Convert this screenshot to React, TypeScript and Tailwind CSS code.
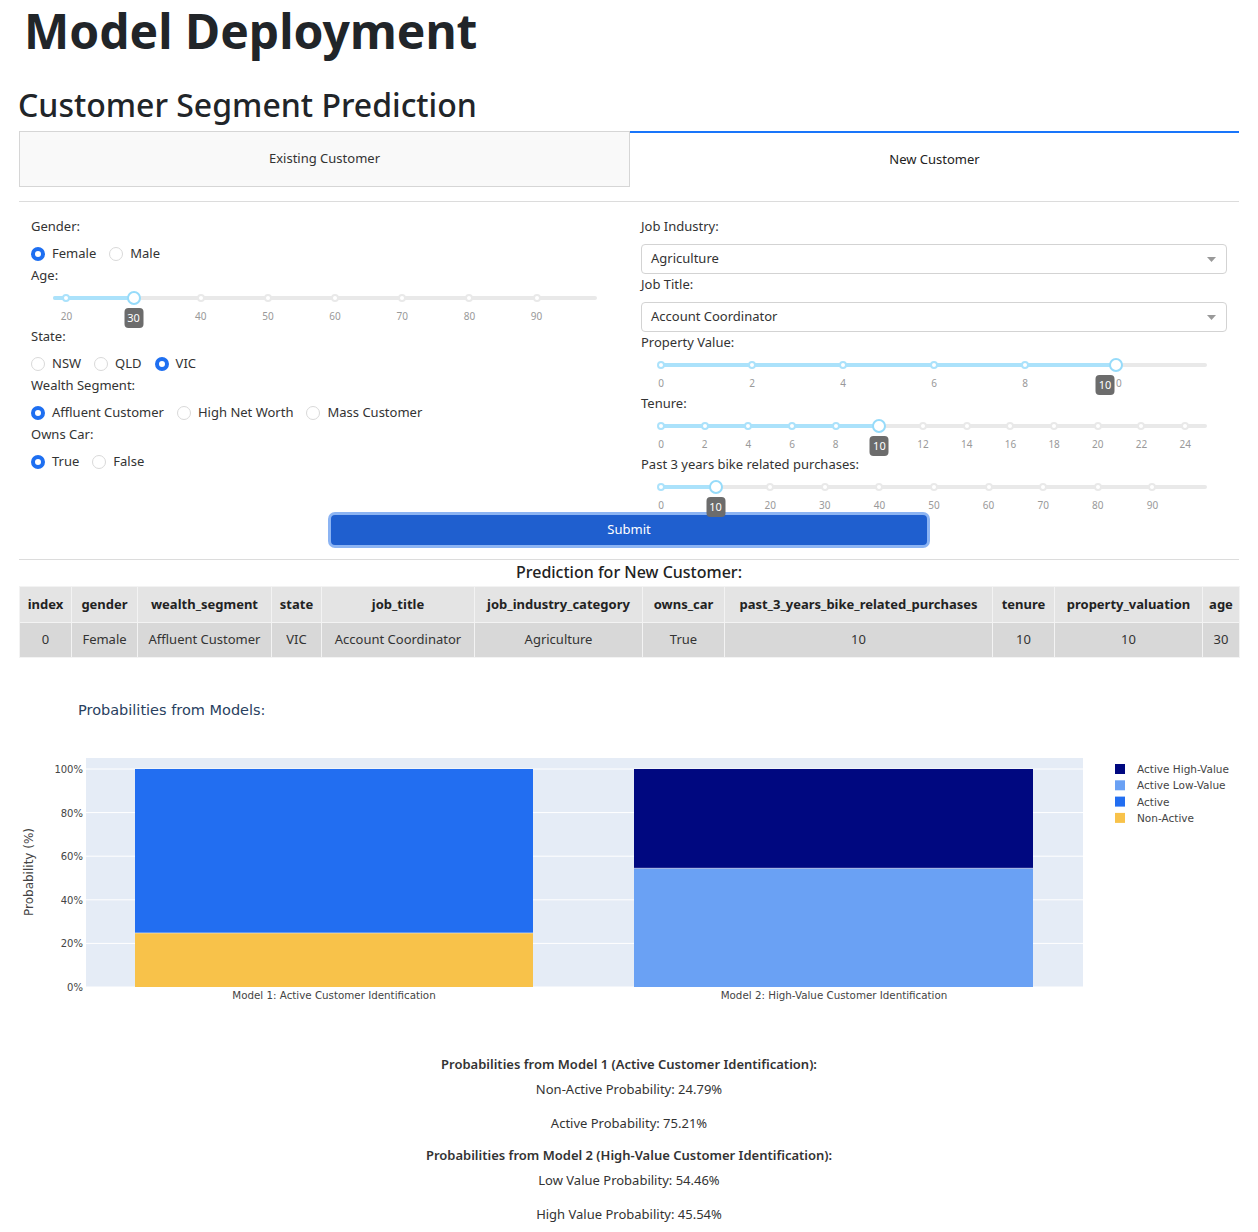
import React from "react";

const FONT = { fontFamily: '"Noto Sans", "Open Sans", sans-serif' };
const PLOT_FONT = '"DejaVu Sans", Verdana, sans-serif';

function Radio({ label, checked }: { label: string; checked?: boolean }) {
  return (
    <label className="flex items-center gap-[7px] mr-[13px]">
      <span
        className={
          checked
            ? "w-[14px] h-[14px] rounded-full border-[4px] border-[#1e6ff1] bg-white"
            : "w-[14px] h-[14px] rounded-full border border-[#d9d9d9] bg-white"
        }
      />
      <span className="text-[13px] text-[#333]">{label}</span>
    </label>
  );
}

function Label({ children }: { children: React.ReactNode }) {
  return <div className="h-[22px] flex items-center text-[13px] text-[#333]">{children}</div>;
}

function RadioRow({ items, selected }: { items: string[]; selected: string }) {
  return (
    <div className="mt-[5px] h-[22px] flex items-center">
      {items.map((i) => (
        <Radio key={i} label={i} checked={i === selected} />
      ))}
    </div>
  );
}

type SliderProps = {
  min: number;
  max: number;
  value: number;
  marks: number[];
  tipShift?: number;
  inset?: string;
};

function Slider({ min, max, value, marks, tipShift = 0, inset = "ml-[20px] mr-[20px]" }: SliderProps) {
  const pct = (v: number) => ((v - min) / (max - min)) * 100;
  return (
    <div className={"relative h-[39px] " + inset}>
      <div className="absolute left-0 right-0 top-[9px] h-[4px] rounded-full bg-[#e9e9e9]" />
      <div
        className="absolute left-0 top-[9px] h-[4px] rounded-full bg-[#abe2fb]"
        style={{ width: pct(value) + "%" }}
      />
      {marks.map((m) => (
        <span
          key={"d" + m}
          className={
            "absolute top-[7px] -ml-[4px] w-[8px] h-[8px] rounded-full border-2 bg-white " +
            (m <= value ? "border-[#abe2fb]" : "border-[#e9e9e9]")
          }
          style={{ left: pct(m) + "%" }}
        />
      ))}
      {marks.map((m) => (
        <span
          key={"l" + m}
          className="absolute top-[22px] -translate-x-1/2 text-[10px] leading-[14px] text-[#999]"
          style={{ left: pct(m) + "%" }}
        >
          {m}
        </span>
      ))}
      <span
        className="absolute top-[4px] -ml-[7px] w-[14px] h-[14px] rounded-full border-2 border-[#96dbfa] bg-white"
        style={{ left: pct(value) + "%" }}
      />
      <span
        className="absolute top-[21px] -translate-x-1/2 h-[20px] min-w-[19px] px-[3px] rounded-[4px] bg-[#6c6c6c] text-white text-[11px] leading-[20px] text-center"
        style={{ left: `calc(${pct(value)}% + ${tipShift}px)` }}
      >
        {value}
      </span>
    </div>
  );
}

function Dropdown({ value }: { value: string }) {
  return (
    <div className="mt-[6px] h-[30px] flex items-center justify-between border border-[#d3d3d3] rounded-[4px] pl-[9px] pr-[10px] bg-white">
      <span className="text-[13px] text-[#333]">{value}</span>
      <svg width="9" height="5" viewBox="0 0 9 5">
        <path d="M0 0 L9 0 L4.5 5 Z" fill="#999" />
      </svg>
    </div>
  );
}

const columns: [string, number, string][] = [
  ["index", 52, "0"],
  ["gender", 66, "Female"],
  ["wealth_segment", 134, "Affluent Customer"],
  ["state", 50, "VIC"],
  ["job_title", 153, "Account Coordinator"],
  ["job_industry_category", 168, "Agriculture"],
  ["owns_car", 82, "True"],
  ["past_3_years_bike_related_purchases", 268, "10"],
  ["tenure", 62, "10"],
  ["property_valuation", 148, "10"],
  ["age", 37, "30"],
];

function Chart() {
  const y = (p: number) => 987 - p * 2.18;
  const ticks = [0, 20, 40, 60, 80, 100];
  const legend: [string, string][] = [
    ["Active High-Value", "#000880"],
    ["Active Low-Value", "#6aa1f4"],
    ["Active", "#226ef1"],
    ["Non-Active", "#f8c24a"],
  ];
  return (
    <svg width="1220" height="360" viewBox="19 690 1220 360" className="block" style={{ fontFamily: PLOT_FONT }}>
      <text x="78" y="715" fontSize="14.5" fill="#2a3f5f">
        Probabilities from Models:
      </text>
      <rect x="86" y="758" width="997" height="229" fill="#e5ecf6" />
      {ticks.map((t) => (
        <g key={t}>
          <line x1="86" x2="1083" y1={y(t)} y2={y(t)} stroke="#fff" strokeWidth="1" />
          <text x="83" y={y(t) + 4} fontSize="10" textAnchor="end" fill="#444">
            {t}%
          </text>
        </g>
      ))}
      <rect x="135" y={y(24.79)} width="398" height={24.79 * 2.18} fill="#f8c24a" />
      <rect x="135" y={y(100)} width="398" height={75.21 * 2.18} fill="#226ef1" />
      <rect x="634" y={y(54.46)} width="399" height={54.46 * 2.18} fill="#6aa1f4" />
      <rect x="634" y={y(100)} width="399" height={45.54 * 2.18} fill="#000880" />
      <line x1="135" x2="533" y1={y(24.79)} y2={y(24.79)} stroke="#e5ecf6" strokeWidth="0.6" />
      <line x1="634" x2="1033" y1={y(54.46)} y2={y(54.46)} stroke="#e5ecf6" strokeWidth="0.6" />
      <text x="334" y="999" fontSize="10.3" textAnchor="middle" fill="#444">
        Model 1: Active Customer Identification
      </text>
      <text x="834" y="999" fontSize="10.3" textAnchor="middle" fill="#444">
        Model 2: High-Value Customer Identification
      </text>
      <text x="33" y="872" fontSize="12" textAnchor="middle" fill="#444" transform="rotate(-90 33 872)">
        Probability (%)
      </text>
      {legend.map(([name, c], i) => (
        <g key={name}>
          <rect x="1115" y={764 + i * 16.3} width="10" height="10" fill={c} />
          <text x="1137" y={773 + i * 16.3} fontSize="10.5" fill="#444">
            {name}
          </text>
        </g>
      ))}
    </svg>
  );
}

export default function App() {
  return (
    <div className="bg-white min-h-[1232px] px-[19px] text-[#333]" style={FONT}>
      <h1 className="ml-[5px] h-[62px] text-[48px] leading-[62px] font-bold text-[#212529]">Model Deployment</h1>
      <h2 className="mt-[20px] -ml-[1px] h-[46px] text-[32px] leading-[46px] font-medium text-[#212529]">
        Customer Segment Prediction
      </h2>

      <div className="mt-[3px] flex">
        <div className="w-[611px] h-[56px] flex items-center justify-center bg-[#f9f9f9] border border-[#d6d6d6] text-[13px] text-[#333]">
          Existing Customer
        </div>
        <div className="flex-1 h-[56px] flex items-center justify-center bg-white border-t-2 border-[#1975fa] text-[13px] text-[#222]">
          New Customer
        </div>
      </div>
      <div className="mt-[14px] h-px bg-[#dcdcdc]" />

      <div className="pt-[14px] grid grid-cols-2">
        <div className="px-[12px]">
          <Label>Gender:</Label>
          <RadioRow items={["Female", "Male"]} selected="Female" />
          <Label>Age:</Label>
          <Slider min={18} max={99} value={30} marks={[20, 30, 40, 50, 60, 70, 80, 90]} inset="ml-[22px] mr-[20px]" />
          <Label>State:</Label>
          <RadioRow items={["NSW", "QLD", "VIC"]} selected="VIC" />
          <Label>Wealth Segment:</Label>
          <RadioRow items={["Affluent Customer", "High Net Worth", "Mass Customer"]} selected="Affluent Customer" />
          <Label>Owns Car:</Label>
          <RadioRow items={["True", "False"]} selected="True" />
        </div>
        <div className="px-[12px]">
          <Label>Job Industry:</Label>
          <Dropdown value="Agriculture" />
          <Label>Job Title:</Label>
          <Dropdown value="Account Coordinator" />
          <Label>Property Value:</Label>
          <Slider min={0} max={12} value={10} marks={[0, 2, 4, 6, 8, 10]} tipShift={-11} />
          <Label>Tenure:</Label>
          <Slider min={0} max={25} value={10} marks={[0, 2, 4, 6, 8, 10, 12, 14, 16, 18, 20, 22, 24]} />
          <Label>Past 3 years bike related purchases:</Label>
          <Slider min={0} max={100} value={10} marks={[0, 10, 20, 30, 40, 50, 60, 70, 80, 90]} />
        </div>
      </div>

      <div className="-mt-[3px] flex justify-center">
        <button className="w-[602px] h-[36px] rounded-[7px] border-[3px] border-[#8cb4f3] bg-[#1f5fcf] text-white text-[13px]">
          Submit
        </button>
      </div>
      <div className="mt-[11px] h-px bg-[#dcdcdc]" />
      <div className="h-[24px] flex items-center justify-center text-[16px] font-medium text-[#222]">
        Prediction for New Customer:
      </div>

      <table className="mt-[2px] table-fixed w-full border-collapse text-[13px]">
        <colgroup>
          {columns.map(([n, w]) => (
            <col key={n} style={{ width: w }} />
          ))}
        </colgroup>
        <thead>
          <tr className="h-[36px] bg-[#e4e4e4]">
            {columns.map(([n]) => (
              <th key={n} className="border border-[#f3f3f3] font-bold text-[#222] text-center px-0">
                {n}
              </th>
            ))}
          </tr>
        </thead>
        <tbody>
          <tr className="h-[35px] bg-[#d8d8d8]">
            {columns.map(([n, , v]) => (
              <td key={n} className="border border-[#f3f3f3] text-center text-[#333]">
                {v}
              </td>
            ))}
          </tr>
        </tbody>
      </table>

      <div className="mt-[32px]">
        <Chart />
      </div>

      <div className="mt-[3px] flex flex-col items-center text-[13px] text-[#333]">
        <div className="h-[24px] flex items-center font-semibold">
          Probabilities from Model 1 (Active Customer Identification):
        </div>
        <div className="h-[26px] flex items-center">Non-Active Probability: 24.79%</div>
        <div className="mt-[8px] h-[26px] flex items-center">Active Probability: 75.21%</div>
        <div className="mt-[7px] h-[24px] flex items-center font-semibold">
          Probabilities from Model 2 (High-Value Customer Identification):
        </div>
        <div className="h-[26px] flex items-center">Low Value Probability: 54.46%</div>
        <div className="mt-[8px] h-[26px] flex items-center">High Value Probability: 45.54%</div>
      </div>
    </div>
  );
}
